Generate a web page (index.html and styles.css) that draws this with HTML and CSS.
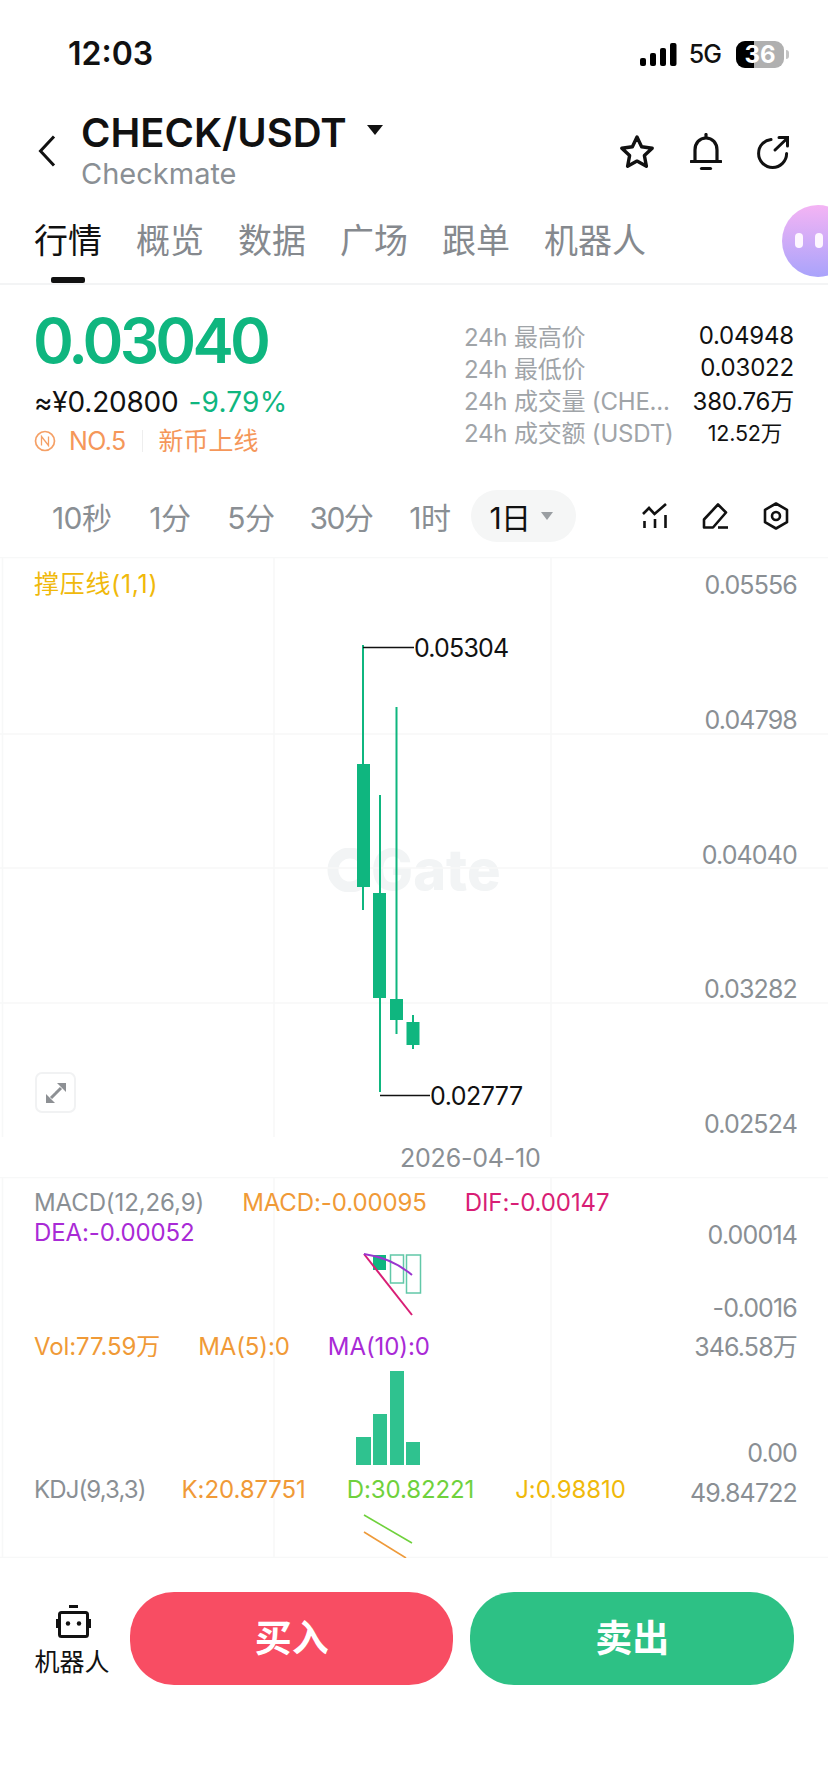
FILE: index.html
```html
<!DOCTYPE html>
<html lang="zh">
<head>
    <meta charset="UTF-8">
    <meta name="viewport" content="width=device-width, initial-scale=1.0">
    <title>CHECK/USDT</title>
    <link rel="stylesheet" href="styles.css">
</head>
<body>

<div class="status-bar">
    <span class="time">12:03</span>
    <div class="status-right">
        <svg class="signal" width="37" height="23" viewBox="0 0 37 23">
            <rect x="0" y="15" width="6" height="8" rx="2"/>
            <rect x="10" y="10" width="6" height="13" rx="2"/>
            <rect x="20" y="5" width="6" height="18" rx="2"/>
            <rect x="30" y="0" width="6.5" height="23" rx="2"/>
        </svg>
        <span class="net">5G</span>
        <div class="battery"><div class="battery-fill"></div><span>36</span></div>
        <div class="battery-nub"></div>
    </div>
</div>

<header class="header">
    <svg class="back" width="18" height="32" viewBox="0 0 18 32" fill="none" stroke="#111" stroke-width="3">
        <path d="M16 1.500 2.500 16 16 30.500"/>
    </svg>
    <div class="pair">
        <div class="pair-top">
            <span class="pair-name">CHECK/USDT</span>
            <i class="pair-caret"></i>
        </div>
        <div class="pair-sub">Checkmate</div>
    </div>
    <div class="header-icons">
        <svg width="36" height="36" viewBox="0 0 36 36" fill="none" stroke="#111" stroke-width="3.400" stroke-linejoin="round">
            <path d="M18 3l4.600 9.800 10.600 1.400-7.800 7.400 2 10.700L18 27.100 8.600 32.300l2-10.700L2.800 14.200l10.600-1.400z"/>
        </svg>
        <svg width="32" height="38" viewBox="1 0 32 38" fill="none" stroke="#111" stroke-width="3.200" stroke-linecap="round">
            <path d="M6 28V17C6 10 10.500 5 17 5s11 5 11 12v11"/>
            <path d="M2 28.500h30"/>
            <path d="M17 1.500v2"/>
            <path d="M12.500 35.500h9"/>
        </svg>
        <svg width="32" height="34" viewBox="0 0 32 34" fill="none" stroke="#111" stroke-width="3" stroke-linecap="round">
            <path d="M14 4.500C7.500 5.300 1.600 10.500 1.600 18.500a14 14 0 0 0 28 0"/>
            <path d="M18 15 29.500 4"/>
            <path d="M22 2.500h8.500V11"/>
        </svg>
    </div>
</header>

<nav class="tabs">
    <a class="tab active">行情</a>
    <a class="tab">概览</a>
    <a class="tab">数据</a>
    <a class="tab">广场</a>
    <a class="tab">跟单</a>
    <a class="tab">机器人</a>
    <div class="bot-bubble"><i></i><i></i></div>
</nav>

<section class="ticker">
    <div class="ticker-left">
        <div class="price">0.03040</div>
        <div class="price-sub">
            <span>≈¥0.20800</span>
            <span class="change">-9.79%</span>
        </div>
        <div class="tags">
            <svg width="22" height="22" viewBox="0 0 22 22" fill="none" stroke="#f5a066" stroke-width="1.700">
                <circle cx="11" cy="11" r="9.500"/>
                <path d="M7.500 15.500v-9l7 9v-9" stroke-width="1.300"/>
            </svg>
            <span class="rank">NO.5</span>
            <i class="tag-sep"></i>
            <span>新币上线</span>
        </div>
    </div>
    <div class="stats">
        <div class="stat"><span class="stat-label">24h 最高价</span><span>0.04948</span></div>
        <div class="stat"><span class="stat-label">24h 最低价</span><span>0.03022</span></div>
        <div class="stat"><span class="stat-label">24h 成交量 (CHE...</span><span>380.76万</span></div>
        <div class="stat"><span class="stat-label">24h 成交额 (USDT)</span><span class="stat-small">12.52万</span></div>
    </div>
</section>

<div class="toolbar">
    <a class="tf tf-10s">10秒</a>
    <a class="tf tf-1m">1分</a>
    <a class="tf tf-5m">5分</a>
    <a class="tf tf-30m">30分</a>
    <a class="tf tf-1h">1时</a>
    <a class="tf-active">1日<i></i></a>
    <div class="tool-icons">
        <svg width="26" height="26" viewBox="0 0 26 26" fill="none" stroke="#111" stroke-width="2.600">
            <path d="M1 11l6-6 5.500 6L24 1"/>
            <path d="M2.500 18v7M13 16v9M23.500 12v13"/>
        </svg>
        <svg width="27" height="26" viewBox="0 0 27 26" fill="none" stroke="#111" stroke-width="2.600" stroke-linejoin="round">
            <path d="M16 1.500l8 8L11 24.500H2v-8z"/>
            <path d="M16 24.500h10"/>
        </svg>
        <svg width="26" height="28" viewBox="0 0 26 28" fill="none" stroke="#111" stroke-width="2.600" stroke-linejoin="round">
            <path d="M13 1.500l11 6.300v12.400l-11 6.300-11-6.300V7.800z"/>
            <circle cx="13" cy="14" r="4"/>
        </svg>
    </div>
</div>

<section class="main-chart">
    <div class="watermark">
        <svg width="46" height="44" viewBox="0 0 46 44" fill="none" stroke="#f2f4f5" stroke-width="11">
            <path d="M40 10a17 17 0 1 0 0 24"/>
        </svg>
        <span>Gate</span>
    </div>
    <svg class="plot" viewBox="0 557 828 580">
        <path class="grid" d="M0 557.500h828M0 734h828M0 868h828M0 1003h828M2.500 557v580M274 557v580M551 557v580"/>
        <g fill="#0fb67f" stroke="none">
            <rect x="362" y="645" width="2" height="265"/>
            <rect x="357" y="764" width="13" height="123"/>
            <rect x="379" y="795" width="2" height="297"/>
            <rect x="373" y="893" width="13" height="105"/>
            <rect x="395.500" y="707" width="2" height="327"/>
            <rect x="390" y="999" width="13" height="21"/>
            <rect x="412" y="1015" width="2" height="34"/>
            <rect x="406.500" y="1022" width="13" height="23"/>
        </g>
        <path d="M363 647.500h51M380 1095.500h50" stroke="#111" stroke-width="1.500" fill="none"/>
    </svg>
    <div class="chart-legend">撑压线(1,1)</div>
    <div class="axis main-axis">
        <span>0.05556</span><span>0.04798</span><span>0.04040</span><span>0.03282</span><span>0.02524</span>
    </div>
    <span class="peak peak-high">0.05304</span>
    <span class="peak peak-low">0.02777</span>
    <div class="expand">
        <svg width="20" height="20" viewBox="0 0 20 20" fill="#8d9094" stroke="#8d9094">
            <path d="M11 0h9v9z" stroke="none"/>
            <path d="M0 11v9h9z" stroke="none"/>
            <path d="M15 5 9.500 10.500M5 15l5.500-5.500" stroke-width="3"/>
        </svg>
    </div>
</section>

<div class="date-row">2026-04-10</div>

<section class="sub-charts">
    <div class="pane pane-macd">
        <svg class="plot" viewBox="0 1177 828 150">
            <path class="grid" d="M0 1177.500h828M274 1177v150M551 1177v150M2.500 1177v150"/>
            <rect x="373" y="1255" width="13" height="15" fill="#0fb67f"/>
            <g fill="none" stroke="#62c8a8" stroke-width="1.500">
                <rect x="390.500" y="1255" width="13" height="28"/>
                <rect x="406.500" y="1255" width="14" height="38"/>
            </g>
            <path d="M364 1254 412 1315" stroke="#d81e75" stroke-width="2" fill="none"/>
            <path d="M364 1254Q392 1258 412 1275" stroke="#9a35cf" stroke-width="2" fill="none"/>
        </svg>
        <div class="legend">
            <span class="c-gray">MACD(12,26,9)</span>
            <span class="c-orange">MACD:-0.00095</span>
            <span class="c-pink">DIF:-0.00147</span>
            <span class="c-purple">DEA:-0.00052</span>
        </div>
        <div class="axis macd-axis"><span>0.00014</span><span>-0.0016</span></div>
    </div>
    <div class="pane pane-vol">
        <svg class="plot" viewBox="0 1327 828 138">
            <path class="grid" d="M274 1327v138M551 1327v138M2.500 1327v138"/>
            <g fill="#2fc28f">
                <rect x="356" y="1437" width="15" height="28"/>
                <rect x="373" y="1414" width="14" height="51"/>
                <rect x="390" y="1371" width="14" height="94"/>
                <rect x="406" y="1442" width="14" height="23"/>
            </g>
        </svg>
        <div class="legend">
            <span class="c-orange">Vol:77.59万</span>
            <span class="c-orange">MA(5):0</span>
            <span class="c-purple">MA(10):0</span>
        </div>
        <div class="axis vol-axis"><span>346.58万</span><span>0.00</span></div>
    </div>
    <div class="pane pane-kdj">
        <svg class="plot" viewBox="0 1465 828 93">
            <path class="grid" d="M274 1465v93M551 1465v93M2.500 1465v93M0 1557.500h828"/>
            <path d="M364 1515 412 1543" stroke="#6fd13c" stroke-width="1.600" fill="none"/>
            <path d="M364 1532 406 1558" stroke="#ee9a3a" stroke-width="1.600" fill="none"/>
        </svg>
        <div class="legend legend-kdj">
            <span class="c-gray">KDJ(9,3,3)</span>
            <span class="c-orange">K:20.87751</span>
            <span class="c-green">D:30.82221</span>
            <span class="c-yellow">J:0.98810</span>
        </div>
        <div class="axis kdj-axis"><span>49.84722</span></div>
    </div>
</section>

<footer class="action-bar">
    <div class="robot">
        <svg width="36" height="33" viewBox="0 0 36 33" fill="#111">
            <rect x="13" y="0" width="9" height="3"/>
            <rect x="3.500" y="7.500" width="28" height="24" rx="2" fill="none" stroke="#111" stroke-width="3"/>
            <rect x="0" y="14" width="2.500" height="9"/>
            <rect x="32.500" y="14" width="2.500" height="9"/>
            <circle cx="12" cy="18.500" r="2.200"/>
            <circle cx="23" cy="18.500" r="2.200"/>
        </svg>
        <span>机器人</span>
    </div>
    <a class="btn btn-buy">买入</a>
    <a class="btn btn-sell">卖出</a>
</footer>

</body>
</html>
```

FILE: styles.css
```css
* {
    box-sizing: border-box;
}
body {
    margin: 0;
    width: 828px;
    height: 1792px;
    overflow: hidden;
    background: #fff;
    color: #111;
    font-family: Inter, "Noto Sans CJK SC", sans-serif;
}
svg {
    display: block;
}

/* status bar */
.status-bar {
    height: 100px;
    padding: 36px 39px 0 68px;
    display: flex;
    justify-content: space-between;
    align-items: flex-start;
}
.time {
    font-size: 32px;
    line-height: 36px;
    font-weight: 600;
}
.status-right {
    display: flex;
    align-items: center;
    height: 36px;
}
.net {
    margin-left: 12px;
    font-size: 25px;
    font-weight: 500;
    letter-spacing: -1px;
}
.battery {
    position: relative;
    margin-left: 15px;
    width: 48px;
    height: 27px;
    border-radius: 9px;
    background: #b0b0b0;
    overflow: hidden;
    color: #fff;
    font-size: 24px;
    font-weight: 700;
    line-height: 27px;
    text-align: center;
}
.battery-fill {
    position: absolute;
    left: 0;
    top: 0;
    bottom: 0;
    width: 18px;
    background: #000;
}
.battery span {
    position: relative;
}
.battery-nub {
    width: 3px;
    height: 9px;
    margin-left: 2px;
    border-radius: 0 3px 3px 0;
    background: #c4c4c4;
}

/* header */
.header {
    height: 90px;
    padding: 12px 39px 0 38px;
    display: flex;
    align-items: flex-start;
}
.back {
    margin-top: 23px;
}
.pair {
    margin-left: 25px;
}
.pair-top {
    display: flex;
    align-items: center;
    height: 40px;
}
.pair-name {
    font-size: 40px;
    font-weight: 600;
}
.pair-caret {
    margin-left: 20px;
    margin-top: -4px;
    border-left: 8px solid transparent;
    border-right: 8px solid transparent;
    border-top: 10px solid #111;
}
.pair-sub {
    margin-top: 6px;
    font-size: 29px;
    line-height: 32px;
    color: #8a8f94;
}
.header-icons {
    margin-left: auto;
    margin-top: 21px;
    display: flex;
    align-items: center;
    gap: 35px;
}

/* tabs */
.tabs {
    position: relative;
    height: 95px;
    padding: 29px 0 0 34px;
    display: flex;
    gap: 34px;
    border-bottom: 2px solid #f3f4f5;
}
.tab {
    position: relative;
    height: 50px;
    font-size: 34px;
    line-height: 44px;
    color: #85898e;
}
.tab.active {
    color: #111;
}
.tab.active::after {
    content: "";
    position: absolute;
    left: 17px;
    bottom: -14px;
    width: 34px;
    height: 6px;
    border-radius: 2px;
    background: #111;
}
.bot-bubble {
    position: absolute;
    left: 782px;
    top: 15px;
    width: 72px;
    height: 72px;
    border-radius: 50%;
    background: linear-gradient(#f4b4f4, #a9a3fb);
    display: flex;
    gap: 12px;
    padding: 28px 0 0 13px;
}
.bot-bubble i {
    width: 8px;
    height: 15px;
    border-radius: 4px;
    background: #fdf6ff;
}

/* ticker */
.ticker {
    height: 205px;
    padding: 21px 34px 0;
    display: flex;
    justify-content: space-between;
}
.ticker-left {
    width: 429px;
}
.price {
    margin-left: -1px;
    font-size: 62px;
    line-height: 70px;
    font-weight: 600;
    color: #0fb67f;
    letter-spacing: -3.800px;
}
.price-sub {
    margin-top: 9px;
    display: flex;
    gap: 10px;
    font-size: 28px;
    line-height: 34px;
    letter-spacing: -0.200px;
}
.change {
    letter-spacing: 0.200px;
    color: #0fb67f;
}
.tags {
    margin-top: 4px;
    display: flex;
    align-items: center;
    font-size: 25px;
    line-height: 36px;
    color: #f5975a;
}
.rank {
    margin-left: 13px;
    letter-spacing: -0.600px;
}
.tag-sep {
    width: 1px;
    height: 22px;
    margin: 0 16px;
    background: #eee;
}
.stats {
    width: 330px;
    margin-top: 13px;
    display: flex;
    flex-direction: column;
}
.stat {
    display: flex;
    justify-content: space-between;
    align-items: center;
    height: 32px;
    font-size: 24px;
    letter-spacing: -0.200px;
}
.stat-label {
    color: #a0a4a8;
}
.stat-small {
    font-size: 21.500px;
    margin-right: 12px;
}

/* timeframe toolbar */
.toolbar {
    height: 52px;
    display: flex;
    align-items: center;
    font-size: 30px;
    letter-spacing: -0.600px;
    color: #8a8f94;
}
.tf {
    white-space: nowrap;
}
.tf-10s {
    margin-left: 52px;
}
.tf-1m {
    margin-left: 38px;
}
.tf-5m {
    margin-left: 37px;
}
.tf-30m {
    margin-left: 35px;
    letter-spacing: -1.500px;
}
.tf-1h {
    margin-left: 37px;
}
.tf-active {
    margin-left: 21px;
    width: 105px;
    height: 52px;
    padding-left: 18px;
    display: flex;
    align-items: center;
    border-radius: 26px;
    background: #f5f6f6;
    color: #111;
}
.tf-active i {
    margin-left: 11px;
    border-left: 6px solid transparent;
    border-right: 6px solid transparent;
    border-top: 8px solid #9a9ea2;
}
.tool-icons {
    margin-left: auto;
    margin-right: 39px;
    display: flex;
    align-items: center;
    gap: 34px;
}

/* charts */
.main-chart {
    position: relative;
    margin-top: 15px;
    height: 580px;
}
.plot {
    position: absolute;
    left: 0;
    top: 0;
    width: 100%;
    height: 100%;
}
.grid {
    fill: none;
    stroke: #f7f8f8;
    stroke-width: 1.500;
}
.watermark {
    position: absolute;
    left: 322px;
    top: 290px;
    display: flex;
    align-items: center;
    gap: 3px;
    font-size: 56px;
    line-height: 46px;
    font-weight: 800;
    color: #f2f4f5;
}
.chart-legend {
    position: absolute;
    left: 34px;
    top: 13px;
    font-size: 25px;
    line-height: 28px;
    letter-spacing: 0.700px;
    color: #f0b90b;
}
.axis {
    position: absolute;
    right: 31px;
    display: flex;
    flex-direction: column;
    align-items: flex-end;
    font-size: 25px;
    line-height: 30px;
    letter-spacing: -0.850px;
    color: #8a8f94;
}
.main-axis {
    top: 13px;
    height: 569px;
    justify-content: space-between;
}
.peak {
    position: absolute;
    font-size: 25px;
    line-height: 30px;
    letter-spacing: -0.800px;
    color: #111;
}
.peak-high {
    left: 414px;
    top: 76px;
}
.peak-low {
    left: 430px;
    top: 524px;
    letter-spacing: -0.500px;
}
.expand {
    position: absolute;
    left: 35px;
    top: 515px;
    width: 41px;
    height: 41px;
    border: 2px solid #f1f2f3;
    border-radius: 7px;
    display: flex;
    align-items: center;
    justify-content: center;
}
.date-row {
    height: 40px;
    padding-left: 400px;
    font-size: 25px;
    line-height: 42px;
    letter-spacing: -0.200px;
    color: #8a8f94;
}
.sub-charts {
    height: 381px;
}
.pane {
    position: relative;
}
.pane-macd {
    height: 150px;
}
.pane-vol {
    height: 138px;
}
.pane-kdj {
    height: 93px;
}
.legend {
    position: relative;
    padding: 11px 190px 0 34px;
    display: flex;
    flex-wrap: wrap;
    column-gap: 38px;
    font-size: 24px;
    line-height: 30px;
    letter-spacing: -0.100px;
}
.pane-vol .legend {
    padding-top: 5px;
}
.legend-kdj {
    padding-top: 10px;
    padding-right: 0;
    column-gap: 41px;
}
.legend-kdj .c-gray {
    margin-right: -5px;
    letter-spacing: -0.900px;
}
.c-gray {
    color: #8a8f94;
}
.c-orange {
    color: #f09a37;
}
.c-pink {
    color: #d81e75;
}
.c-purple {
    color: #a92ad6;
}
.c-green {
    color: #6fd13c;
}
.c-yellow {
    color: #f0b90b;
}
.macd-axis {
    top: 43px;
    gap: 43px;
}
.vol-axis {
    top: 5px;
    gap: 76px;
}
.kdj-axis {
    top: 13px;
}

/* bottom actions */
.action-bar {
    margin-top: 34px;
    padding: 0 34px;
    display: flex;
    align-items: flex-start;
}
.robot {
    width: 96px;
    padding-top: 13px;
    display: flex;
    flex-direction: column;
    align-items: center;
    margin-left: -10px;
    font-size: 25px;
    line-height: 30px;
}
.robot svg {
    margin-left: 4px;
    margin-bottom: 9px;
}
.btn {
    width: 324px;
    height: 93px;
    border-radius: 44px;
    color: #fff;
    font-size: 37px;
    font-weight: 700;
    line-height: 93px;
    text-align: center;
}
.btn-buy {
    margin-left: 10px;
    background: #f84d63;
}
.btn-sell {
    margin-left: 17px;
    background: #2dc185;
}
```
